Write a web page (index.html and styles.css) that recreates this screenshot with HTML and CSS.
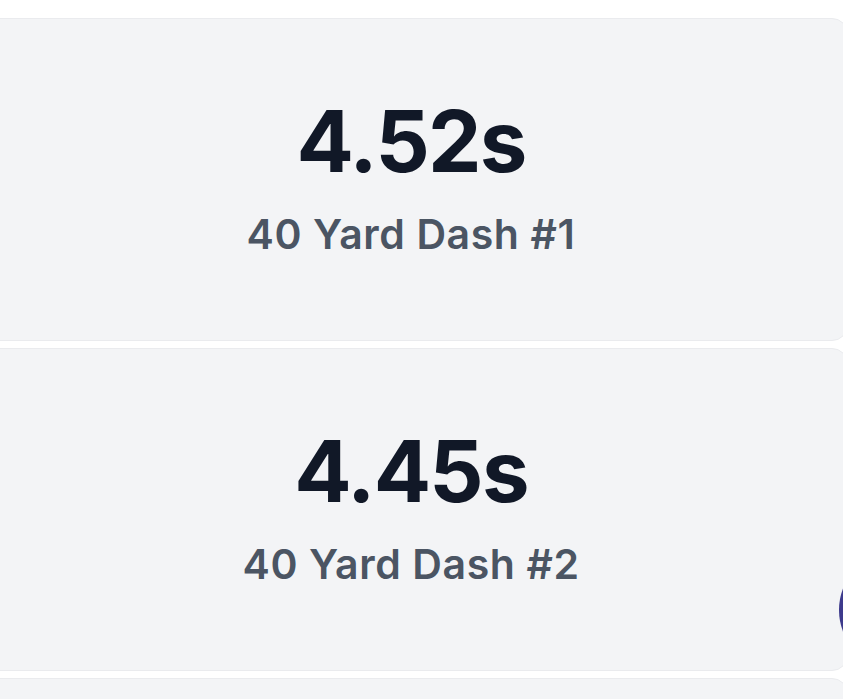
FILE: index.html
```html
<!DOCTYPE html>
<html lang="en">
<head>
<meta charset="utf-8">
<title>Times</title>
<link rel="stylesheet" href="styles.css">
</head>
<body>
<div class="list">
  <div class="card">
    <div class="value">4.52s</div>
    <div class="label">40 Yard Dash #1</div>
  </div>
  <div class="card">
    <div class="value">4.45s</div>
    <div class="label">40 Yard Dash #2</div>
  </div>
  <div class="card"></div>
</div>
<div class="fab"></div>
</body>
</html>
```
FILE: styles.css
```css
html, body {
  margin: 0;
  padding: 0;
  background: #ffffff;
  overflow: hidden;
  height: 699px;
}
body {
  position: relative;
  font-family: Inter, "Noto Sans", sans-serif;
}
.list {
  display: flex;
  flex-direction: column;
  gap: 7px;
  padding-top: 18px;
  margin-left: -26px;
  width: 874px;
}
.card {
  box-sizing: border-box;
  height: 323px;
  background: #f3f4f6;
  border: 1px solid #eaebee;
  border-radius: 16px;
  display: flex;
  flex-direction: column;
  align-items: center;
  padding-top: 80px;
}
.value {
  font-size: 85px;
  line-height: 1;
  font-weight: 700;
  color: #111827;
  letter-spacing: -1.8px;
}
.label {
  margin-top: 30px;
  font-size: 41px;
  line-height: 1;
  font-weight: 600;
  color: #4b5563;
  letter-spacing: 0.6px;
}
.fab {
  position: absolute;
  left: 839px;
  top: 550px;
  width: 120px;
  height: 120px;
  border-radius: 50%;
  background: #3d3a8c;
}
```
